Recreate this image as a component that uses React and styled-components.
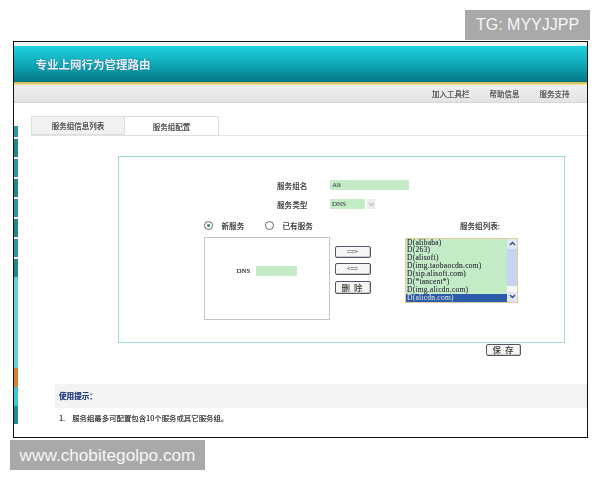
import React from "react";
import styled, { createGlobalStyle } from "styled-components";

const Global = createGlobalStyle`
  html, body { margin: 0; padding: 0; background: #fff; }
  body { width: 600px; height: 480px; overflow: hidden; position: relative; font-family: "Noto Sans CJK SC", "Liberation Sans", sans-serif; }
  * { box-sizing: border-box; }
`;
const CJK = `"Noto Sans CJK SC", "Liberation Sans", sans-serif`;

const Frame = styled.div`
  margin: 41px 0 0 13px; width: 575px; height: 397px;
  border: 1.5px solid #111; background: #fff; overflow: hidden;
  filter: blur(0.35px); display: flex; flex-direction: column;
  text-shadow: 0 0 0.6px rgba(0, 0, 0, 0.55);
`;
const TopSliver = styled.div`height: 3.5px; background: #eef4f4;`;
const Banner = styled.header`
  height: 36px; flex: none; padding: 1px 0 0 21.5px; display: flex; align-items: center;
  background: linear-gradient(#20d2de, #0fa9b8 50%, #057684);
  color: #eef; font: 700 11.5px ${CJK}; text-shadow: 0 0 1px #0b5c66;
`;
const Stripe = styled.div`height: 3px; flex: none; background: linear-gradient(#c7b04e, #f6ec9a);`;
const Toolbar = styled.nav`
  height: 18px; flex: none; display: flex; justify-content: flex-end; align-items: center;
  padding-right: 17.5px; gap: 20px; background: linear-gradient(#f0f0f0, #e3e3e3);
  border-bottom: 1px solid #d8d8d8; font: 400 7.5px ${CJK}; color: #555;
`;
const Body = styled.div`flex: 1; display: flex; min-height: 0;`;
const Strip = styled.aside`width: 4px; flex: none; padding-top: 23px; display: flex; flex-direction: column;`;
const Seg = styled.div`height: ${p => p.$h}px; flex: none; background: ${p => p.$c}; margin-bottom: ${p => p.$gap || 0}px;`;
const Main = styled.main`flex: 1; padding: 13px 0 0 13px; min-width: 0;`;
const Tabs = styled.div`display: flex; height: 20px; border-bottom: 1px solid #e2e2e2;`;
const Tab = styled.div`
  width: 94px; height: ${p => (p.$active ? 20 : 19)}px; display: flex; align-items: center; justify-content: center;
  padding-top: 1px; font: 400 7.5px ${CJK}; color: #444; border: 1px solid #dedede;
  border-left-width: ${p => (p.$active ? 0 : 1)}px;
  background: ${p => (p.$active ? "#fff" : "#f1f1f1")};
`;
const Panel = styled.section`
  margin: 20px 0 0 87px; width: 447px; height: 187px; border: 1.5px solid #9fdcd8;
  padding: 19px 0 0 0; font: 400 7.6px ${CJK}; color: #333;
`;
const Field = styled.div`display: flex; align-items: center; height: 19px; padding-left: 158px; gap: 23px;`;
const Label = styled.span`width: 30px; white-space: nowrap; flex: none;`;
const GreenInput = styled.div`
  width: ${p => p.$w}px; height: 10px; background: #c3ecc6; color: #667;
  font: 400 7px "Liberation Serif", serif; padding-left: 2px; line-height: 10px;
`;
const SelectWrap = styled.div`display: flex; align-items: center; gap: 2px;`;
const Arrow = styled.div`
  width: 8px; height: 10px; background: #ececec; display: flex; align-items: center; justify-content: center;
`;
const Lower = styled.div`display: flex; padding: 5px 0 0 84.5px;`;
const LeftCol = styled.div`width: 201.5px; flex: none;`;
const RadioRow = styled.div`display: flex; align-items: center; height: 14px;`;
const RadioItem = styled.label`display: flex; align-items: center; gap: 9px; width: 61px; white-space: nowrap;`;
const Radio = styled.span`
  width: 9px; height: 9px; border-radius: 50%; border: 1px solid #667; background: #fff; flex: none;
  display: flex; align-items: center; justify-content: center;
  &::after { content: ""; width: 3px; height: 3px; border-radius: 50%; background: ${p => (p.$on ? "#2a8a5a" : "transparent")}; }
`;
const Work = styled.div`display: flex; gap: 5px; margin-top: 4px;`;
const Box = styled.div`
  width: 126px; height: 83px; border: 1px solid #c5c5c5; display: flex; align-items: center; gap: 5px;
  padding: 0 0 15px 32px; font: 400 7px "Liberation Serif", serif;
`;
const BtnCol = styled.div`display: flex; flex-direction: column; gap: 5px; padding-top: 9px;`;
const Btn = styled.button`
  width: ${p => p.$w || 36}px; height: ${p => p.$h || 12}px; padding: 0; border: 1px solid #556;
  border-radius: 2px; background: #f6f6f6; color: #333; font: ${p => (p.$bold ? "500 8.5px" : "400 6.5px")} ${CJK};
  line-height: 1; letter-spacing: ${p => (p.$bold ? "1px" : 0)}; box-shadow: inset -1px -1px 0 #ccc;
`;
const DeleteBtn = styled(Btn)`margin-top: 1px;`;
const RightCol = styled.div`width: 113px; flex: none;`;
const ListTitle = styled.div`height: 14px; line-height: 14px; text-align: right; padding-right: 18px;`;
const ListBox = styled.div`
  margin-top: 5px; height: 65px; border: 1px solid #e2cc98; display: flex; background: #c3ecc6;
`;
const Items = styled.ul`flex: 1; margin: 0; padding: 0; list-style: none; overflow: hidden;`;
const Item = styled.li`
  height: 7.9px; padding-left: 1px; white-space: nowrap;
  font: 400 7.5px/7.9px "Liberation Serif", serif; letter-spacing: 0.25px;
  color: ${p => (p.$sel ? "#fff" : "#445")};
  background: ${p => (p.$sel ? "#2a5cab" : "transparent")};
`;
const Scroll = styled.div`width: 10px; flex: none; display: flex; flex-direction: column; background: #c6d4f2;`;
const ScrollBtn = styled.div`height: 10px; flex: none; background: #dfe8fb; display: flex; align-items: center; justify-content: center;`;
const Track = styled.div`flex: 1; display: flex; flex-direction: column; justify-content: flex-end;`;
const Gap = styled.div`height: 6px; background: #f4f7fe;`;
const SaveRow = styled.div`display: flex; padding: 1px 0 0 455px; height: 14px;`;
const Tip = styled.div`
  margin: 27px 0 0 24px; height: 24px; background: #f2f3f3; padding-left: 4px;
  display: flex; align-items: center; font: 700 7.6px ${CJK}; color: #1f3f8f;
`;
const TipText = styled.p`margin: 4px 0 0 28px; font: 400 7.4px/12px ${CJK}; color: #333; display: flex; gap: 7px;`;
const Watermark = styled.div`
  position: absolute; background: #a9a9a9; color: #f6f6f6; font: 400 ${p => p.$fs}px "Liberation Sans", sans-serif;
  display: flex; align-items: center; justify-content: center; height: 30px;
  left: ${p => p.$x}px; top: ${p => p.$y}px; width: ${p => p.$w}px;
`;

const Chev = ({ up, color = "#2b4a80" }) => (
  <svg width="7" height="5" viewBox="0 0 7 5">
    <path d={up ? "M1 4 L3.5 1.5 L6 4" : "M1 1 L3.5 3.5 L6 1"} fill="none" stroke={color} strokeWidth="1.4" />
  </svg>
);

const segs = [
  { h: 11, c: "#2a98a8" },
  { h: 18, c: "#1d8796" },
  { h: 18, c: "#2a98a8" },
  { h: 18, c: "#1d8796" },
  { h: 18, c: "#2a98a8" },
  { h: 18, c: "#1d8796" },
  { h: 18, c: "#2a98a8" },
  { h: 18, c: "#1d8796" },
];
const list = ["D(alibaba)", "D(263)", "D(alisoft)", "D(img.taobaocdn.com)", "D(sip.alisoft.com)", "D(*tancent*)", "D(img.alicdn.com)", "D(alicdn.com)"];

export default function App() {
  return (
    <>
      <Global />
      <Frame>
        <TopSliver />
        <Banner>专业上网行为管理路由</Banner>
        <Stripe />
        <Toolbar>
          <span>加入工具栏</span>
          <span>帮助信息</span>
          <span>服务支持</span>
        </Toolbar>
        <Body>
          <Strip>
            {segs.map((s, i) => <Seg key={i} $h={s.h} $c={s.c} $gap={i === 7 ? 0 : 2} />)}
            <Seg $h={91} $c="#62d2dc" />
            <Seg $h={19} $c="#d97f35" />
            <Seg $h={19} $c="#45c4d2" />
            <Seg $h={18} $c="#1f8a9a" />
          </Strip>
          <Main>
            <Tabs>
              <Tab>服务组信息列表</Tab>
              <Tab $active>服务组配置</Tab>
            </Tabs>
            <Panel>
              <Field>
                <Label>服务组名</Label>
                <GreenInput $w={79}>Ali</GreenInput>
              </Field>
              <Field>
                <Label>服务类型</Label>
                <SelectWrap>
                  <GreenInput $w={35}>DNS</GreenInput>
                  <Arrow><Chev color="#c4c4c4" /></Arrow>
                </SelectWrap>
              </Field>
              <Lower>
                <LeftCol>
                  <RadioRow>
                    <RadioItem><Radio $on />新服务</RadioItem>
                    <RadioItem><Radio />已有服务</RadioItem>
                  </RadioRow>
                  <Work>
                    <Box>
                      <span>DNS</span>
                      <GreenInput $w={41} />
                    </Box>
                    <BtnCol>
                      <Btn>==&gt;</Btn>
                      <Btn>&lt;==</Btn>
                      <DeleteBtn $bold $h={13}>删 除</DeleteBtn>
                    </BtnCol>
                  </Work>
                </LeftCol>
                <RightCol>
                  <ListTitle>服务组列表:</ListTitle>
                  <ListBox>
                    <Items>
                      {list.map((t, i) => <Item key={t} $sel={i === 7}>{t}</Item>)}
                    </Items>
                    <Scroll>
                      <ScrollBtn><Chev up /></ScrollBtn>
                      <Track><Gap /></Track>
                      <ScrollBtn><Chev /></ScrollBtn>
                    </Scroll>
                  </ListBox>
                </RightCol>
              </Lower>
            </Panel>
            <SaveRow><Btn $bold $w={35}>保 存</Btn></SaveRow>
            <Tip>使用提示：</Tip>
            <TipText><span>1.</span><span>服务组最多可配置包含10个服务或其它服务组。</span></TipText>
          </Main>
        </Body>
      </Frame>
      <Watermark $x={465} $y={10} $w={125} $fs={16}>TG: MYYJJPP</Watermark>
      <Watermark $x={10} $y={440} $w={195} $fs={17.2}>www.chobitegolpo.com</Watermark>
    </>
  );
}
